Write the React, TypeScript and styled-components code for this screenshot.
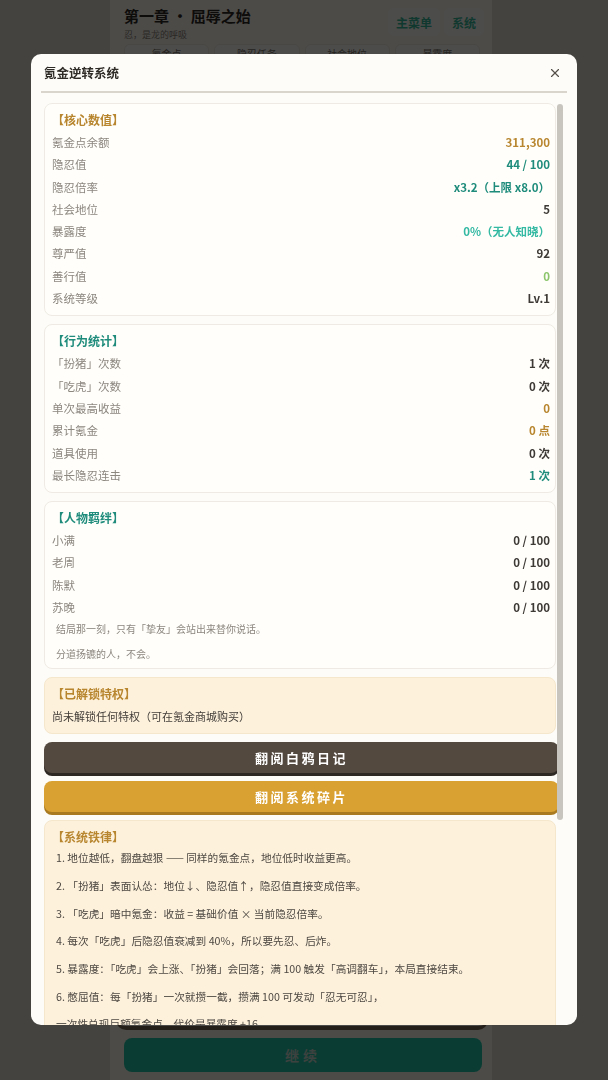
import styled, { createGlobalStyle } from 'styled-components';
import { X } from 'lucide-react';

const GlobalStyle = createGlobalStyle`
  html, body {
    margin: 0;
    padding: 0;
    overflow: hidden;
  }
  body {
    font-family: "Noto Sans CJK SC", "Noto Sans", sans-serif;
  }
`;

type Tone = 'gold' | 'teal' | 'aqua' | 'green' | 'dark';

const toneColor: Record<Tone, string> = {
  gold: '#b8862e',
  teal: '#1f8c7b',
  aqua: '#34b9a3',
  green: '#8cc56c',
  dark: '#3d3935',
};

interface Stat {
  label: string;
  value: string;
  tone: Tone;
}

const coreStats: Stat[] = [
  { label: '氪金点余额', value: '311,300', tone: 'gold' },
  { label: '隐忍值', value: '44 / 100', tone: 'teal' },
  { label: '隐忍倍率', value: 'x3.2（上限 x8.0）', tone: 'teal' },
  { label: '社会地位', value: '5', tone: 'dark' },
  { label: '暴露度', value: '0%（无人知晓）', tone: 'aqua' },
  { label: '尊严值', value: '92', tone: 'dark' },
  { label: '善行值', value: '0', tone: 'green' },
  { label: '系统等级', value: 'Lv.1', tone: 'dark' },
];

const actionStats: Stat[] = [
  { label: '「扮猪」次数', value: '1 次', tone: 'dark' },
  { label: '「吃虎」次数', value: '0 次', tone: 'dark' },
  { label: '单次最高收益', value: '0', tone: 'gold' },
  { label: '累计氪金', value: '0 点', tone: 'gold' },
  { label: '道具使用', value: '0 次', tone: 'dark' },
  { label: '最长隐忍连击', value: '1 次', tone: 'teal' },
];

const bonds: Stat[] = [
  { label: '小满', value: '0 / 100', tone: 'dark' },
  { label: '老周', value: '0 / 100', tone: 'dark' },
  { label: '陈默', value: '0 / 100', tone: 'dark' },
  { label: '苏晚', value: '0 / 100', tone: 'dark' },
];

const rules = [
  '1. 地位越低，翻盘越狠 —— 同样的氪金点，地位低时收益更高。',
  '2. 「扮猪」表面认怂：地位↓、隐忍值↑，隐忍值直接变成倍率。',
  '3. 「吃虎」暗中氪金：收益 = 基础价值 × 当前隐忍倍率。',
  '4. 每次「吃虎」后隐忍值衰减到 40%，所以要先忍、后炸。',
  '5. 暴露度：「吃虎」会上涨、「扮猪」会回落；满 100 触发「高调翻车」，本局直接结束。',
  '6. 憋屈值：每「扮猪」一次就攒一截，攒满 100 可发动「忍无可忍」，',
  '一次性兑现巨额氪金点，代价是暴露度 +16。',
];

/* ---------- page behind the dialog ---------- */

const Screen = styled.div`
  width: 608px;
  height: 1080px;
  background: #e6dfd2;
  display: flex;
  justify-content: center;
`;

const Column = styled.div`
  width: 382px;
  height: 100%;
  margin-left: -6px;
  background: #fffbf2;
  display: flex;
  flex-direction: column;
  padding: 0 8px 8px 14px;
  box-sizing: border-box;
`;

const TopBar = styled.div`
  display: flex;
  align-items: flex-start;
  justify-content: space-between;
  padding-top: 6px;
`;

const ChapterTitle = styled.div`
  font-size: 15px;
  font-weight: 700;
  color: #2f2b27;
  line-height: 20px;
`;

const ChapterSub = styled.div`
  font-size: 9px;
  color: #8e877c;
  line-height: 14px;
  margin-top: 2px;
`;

const PillRow = styled.div`
  display: flex;
  gap: 4px;
  padding-top: 2px;
`;

const Pill = styled.div`
  height: 28px;
  padding: 0 8px;
  border-radius: 6px;
  background: #fffffc;
  color: #3bbd9b;
  font-size: 12px;
  font-weight: 700;
  display: flex;
  align-items: center;
`;

const TabRow = styled.div`
  display: grid;
  grid-template-columns: repeat(4, 1fr);
  gap: 5px;
  margin-top: 2px;
  padding-right: 4px;
`;

const Tab = styled.div`
  height: 26px;
  border-radius: 6px;
  background: #fffffc;
  border: 1px solid #f3ede2;
  font-size: 10px;
  color: #7b746a;
  display: flex;
  justify-content: center;
  padding-top: 1px;
`;

const StoryBox = styled.div`
  flex: 1;
  margin-top: 10px;
  border-radius: 10px;
  background: #fffdf8;
  border-bottom: 4px solid #7d6a58;
  margin-left: -8px;
  margin-right: -4px;
`;

const ContinueButton = styled.div`
  margin-top: 8px;
  margin-right: 2px;
  height: 34px;
  border-radius: 8px;
  background: #24c9aa;
  color: #c9ddd4;
  font-size: 14px;
  font-weight: 700;
  letter-spacing: 4px;
  display: flex;
  align-items: center;
  justify-content: center;
`;

/* ---------- dialog ---------- */

const Overlay = styled.div`
  position: fixed;
  inset: 0;
  background: rgba(0, 0, 0, 0.7);
  padding: 54px 31px 55px;
  display: flex;
`;

const Dialog = styled.div`
  position: relative;
  flex: 1;
  background: #fdfcf8;
  border-radius: 10px;
  display: flex;
  flex-direction: column;
  overflow: hidden;
`;

const DialogHeader = styled.div`
  height: 37px;
  padding: 0 14px 0 13px;
  display: flex;
  align-items: center;
  justify-content: space-between;
`;

const DialogTitle = styled.div`
  font-size: 12.5px;
  font-weight: 700;
  color: #2e2a26;
`;

const CloseButton = styled.div`
  width: 16px;
  height: 16px;
  display: flex;
  align-items: center;
  justify-content: center;
  color: #555049;
`;

const Divider = styled.div`
  height: 2px;
  margin: 0 10px;
  background: #d9d5cd;
`;

const DialogBody = styled.div`
  flex: 1;
  margin: 10px 13px 0 13px;
  padding-right: 8px;
  overflow-y: auto;
  scrollbar-width: none;

  &::-webkit-scrollbar {
    display: none;
  }
`;

/* the scroll thumb, drawn over the body's right edge */
const ScrollThumb = styled.div`
  position: absolute;
  top: 50px;
  right: 14px;
  width: 6px;
  height: 716px;
  border-radius: 3px;
  background: #c8c5bf;
`;

const Stack = styled.div`
  display: flex;
  flex-direction: column;
  gap: 8px;
  padding-bottom: 260px;
`;

const Card = styled.div<{ $warm?: boolean }>`
  background: ${(p) => (p.$warm ? '#fdf1dc' : '#fffefb')};
  border: 1px solid ${(p) => (p.$warm ? '#f5e7cc' : '#efebe4')};
  border-radius: 8px;
  padding: 7px 5px 6px 7px;
`;

const SectionTitle = styled.div<{ $tone: Tone }>`
  font-size: 12px;
  font-weight: 700;
  line-height: 18px;
  color: ${(p) => toneColor[p.$tone]};
  margin-bottom: 2px;
`;

const Row = styled.div`
  display: flex;
  justify-content: space-between;
  align-items: center;
  line-height: 22.3px;
`;

const Label = styled.span`
  font-size: 11.5px;
  color: #8c877f;
`;

const Value = styled.span<{ $tone: Tone }>`
  font-size: 11.5px;
  font-weight: 700;
  color: ${(p) => toneColor[p.$tone]};
`;

const Note = styled.p`
  margin: 3px 0 0;
  padding-left: 4px;
  font-size: 10px;
  line-height: 16px;
  color: #8c877f;

  & + & {
    margin-top: 9px;
  }
`;

const PlainText = styled.div`
  font-size: 11px;
  line-height: 22px;
  color: #433e39;
`;

const ActionButton = styled.div<{ $bg: string; $edge: string }>`
  height: 31px;
  margin-right: -3px;
  border-radius: 8px;
  background: ${(p) => p.$bg};
  box-shadow: 0 3px 0 ${(p) => p.$edge};
  color: #fff;
  font-size: 13px;
  font-weight: 700;
  letter-spacing: 2.5px;
  display: flex;
  align-items: center;
  justify-content: center;
`;

const RuleList = styled.div`
  padding-left: 4px;
  margin-top: 3px;
`;

const Rule = styled.p`
  margin: 0;
  font-size: 10.7px;
  line-height: 18px;
  color: #4d4842;

  & + & {
    margin-top: 9.7px;
  }
`;

const StatRows = ({ items }: { items: Stat[] }) => (
  <>
    {items.map((s) => (
      <Row key={s.label}>
        <Label>{s.label}</Label>
        <Value $tone={s.tone}>{s.value}</Value>
      </Row>
    ))}
  </>
);

const App = () => {
  return (
    <>
      <GlobalStyle />
      <Screen>
        <Column>
          <TopBar>
            <div>
              <ChapterTitle>第一章 · 屈辱之始</ChapterTitle>
              <ChapterSub>忍，是龙的呼吸</ChapterSub>
            </div>
            <PillRow>
              <Pill>主菜单</Pill>
              <Pill>系统</Pill>
            </PillRow>
          </TopBar>
          <TabRow>
            <Tab>氪金点</Tab>
            <Tab>隐忍任务</Tab>
            <Tab>社会地位</Tab>
            <Tab>暴露度</Tab>
          </TabRow>
          <StoryBox />
          <ContinueButton>继续</ContinueButton>
        </Column>
      </Screen>

      <Overlay>
        <Dialog>
          <DialogHeader>
            <DialogTitle>氪金逆转系统</DialogTitle>
            <CloseButton>
              <X size={14} strokeWidth={2} />
            </CloseButton>
          </DialogHeader>
          <Divider />
          <DialogBody>
            <Stack>
              <Card>
                <SectionTitle $tone="gold">【核心数值】</SectionTitle>
                <StatRows items={coreStats} />
              </Card>

              <Card>
                <SectionTitle $tone="teal">【行为统计】</SectionTitle>
                <StatRows items={actionStats} />
              </Card>

              <Card>
                <SectionTitle $tone="teal">【人物羁绊】</SectionTitle>
                <StatRows items={bonds} />
                <Note>结局那一刻，只有「挚友」会站出来替你说话。</Note>
                <Note>分道扬镳的人，不会。</Note>
              </Card>

              <Card $warm>
                <SectionTitle $tone="gold">【已解锁特权】</SectionTitle>
                <PlainText>尚未解锁任何特权（可在氪金商城购买）</PlainText>
              </Card>

              <ActionButton $bg="#54493f" $edge="#2e2823">翻阅白鸦日记</ActionButton>
              <ActionButton $bg="#d9a131" $edge="#a97a1f">翻阅系统碎片</ActionButton>

              <Card $warm>
                <SectionTitle $tone="gold">【系统铁律】</SectionTitle>
                <RuleList>
                  {rules.map((r) => (
                    <Rule key={r}>{r}</Rule>
                  ))}
                </RuleList>
              </Card>
            </Stack>
          </DialogBody>
          <ScrollThumb />
        </Dialog>
      </Overlay>
    </>
  );
};

export default App;
